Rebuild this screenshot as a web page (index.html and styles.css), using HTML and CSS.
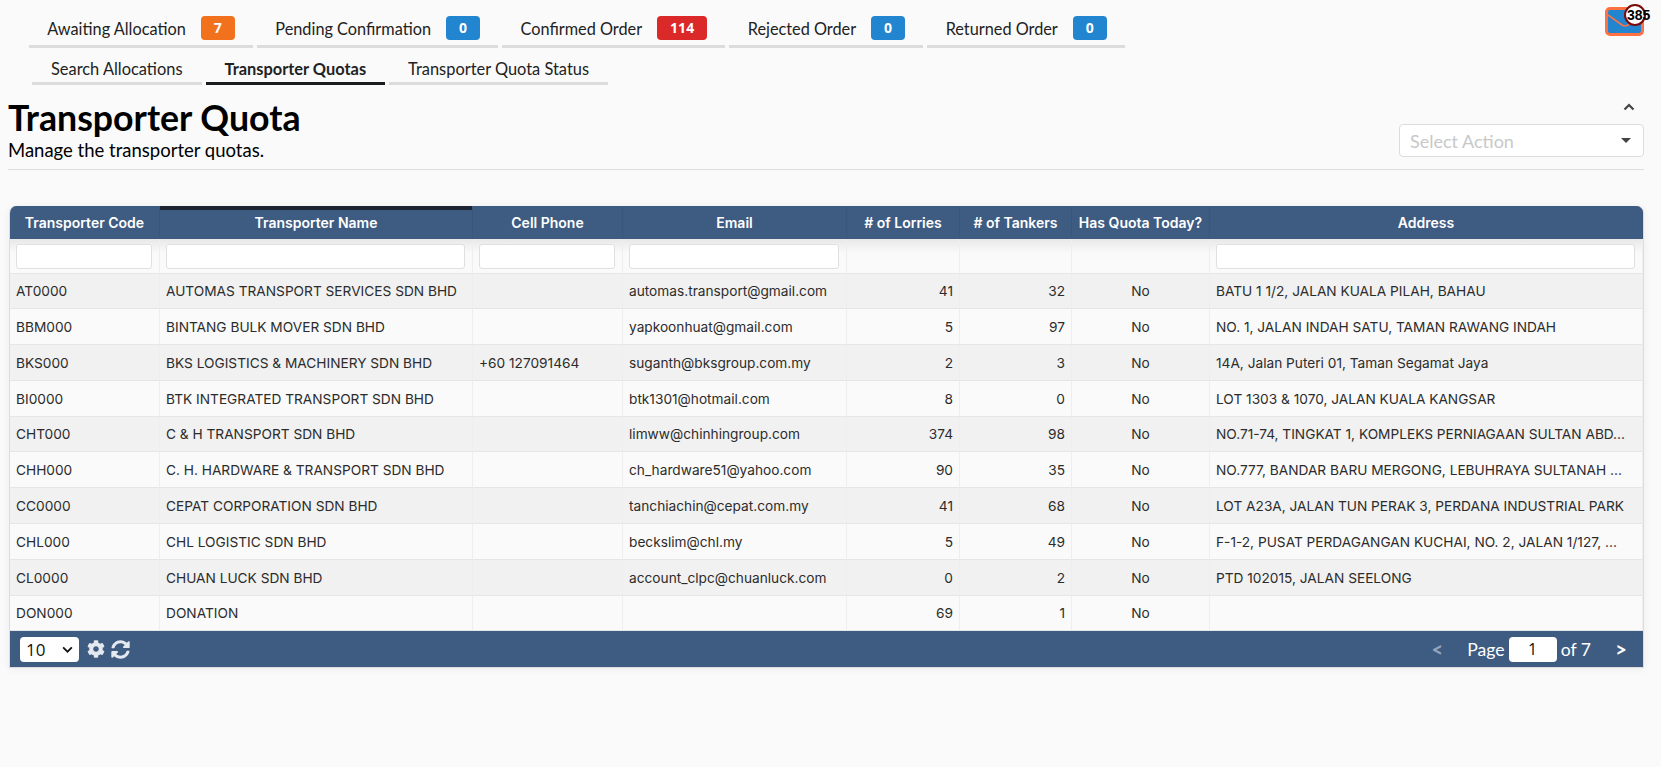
FILE: index.html
```html
<!DOCTYPE html>
<html lang="en">
<head>
<meta charset="utf-8">
<title>Transporter Quota</title>
<link rel="stylesheet" href="styles.css">
</head>
<body>
<div class="top">
  <nav class="tabs tabs-main">
    <a class="tab">Awaiting Allocation <span class="badge orange">7</span></a>
    <a class="tab">Pending Confirmation <span class="badge blue">0</span></a>
    <a class="tab">Confirmed Order <span class="badge red">114</span></a>
    <a class="tab">Rejected Order <span class="badge blue">0</span></a>
    <a class="tab">Returned Order <span class="badge blue">0</span></a>
  </nav>
  <div class="mail">
    <svg class="mail-icon" viewBox="0 0 33 23" width="33" height="23"><path d="M0 5 L14 15 Q17 17 20 15 L33 5" fill="none" stroke="#ff7043" stroke-width="1.6"/></svg>
    <span class="mail-count">385</span>
  </div>
</div>
<nav class="tabs tabs-sub">
  <a class="tab sub">Search Allocations</a>
  <a class="tab sub active">Transporter Quotas</a>
  <a class="tab sub">Transporter Quota Status</a>
</nav>
<header class="page-head">
  <div>
    <h1>Transporter Quota</h1>
    <p>Manage the transporter quotas.</p>
  </div>
  <div class="actions">
    <svg class="chev" viewBox="0 0 12 8" width="12" height="8"><path d="M1.5 6.5 L6 2 L10.5 6.5" fill="none" stroke="#444" stroke-width="2.2"/></svg>
    <div class="select">Select Action<span class="caret"></span></div>
  </div>
</header>
<section class="grid">
  <table>
    <colgroup>
      <col class="c1"><col class="c2"><col class="c3"><col class="c4"><col class="c5"><col class="c6"><col class="c7"><col>
    </colgroup>
    <thead>
      <tr class="heads">
        <th>Transporter Code</th><th class="sorted">Transporter Name</th><th>Cell Phone</th><th>Email</th><th># of Lorries</th><th># of Tankers</th><th>Has Quota Today?</th><th>Address</th>
      </tr>
      <tr class="filters">
        <td><input type="text"></td><td><input type="text"></td><td><input type="text"></td><td><input type="text"></td><td></td><td></td><td></td><td><input type="text"></td>
      </tr>
    </thead>
    <tbody>
      <tr><td>AT0000</td><td>AUTOMAS TRANSPORT SERVICES SDN BHD</td><td></td><td>automas.transport@gmail.com</td><td class="num">41</td><td class="num">32</td><td class="mid">No</td><td>BATU 1 1/2, JALAN KUALA PILAH, BAHAU</td></tr>
      <tr><td>BBM000</td><td>BINTANG BULK MOVER SDN BHD</td><td></td><td>yapkoonhuat@gmail.com</td><td class="num">5</td><td class="num">97</td><td class="mid">No</td><td>NO. 1, JALAN INDAH SATU, TAMAN RAWANG INDAH</td></tr>
      <tr><td>BKS000</td><td>BKS LOGISTICS &amp; MACHINERY SDN BHD</td><td>+60 127091464</td><td>suganth@bksgroup.com.my</td><td class="num">2</td><td class="num">3</td><td class="mid">No</td><td>14A, Jalan Puteri 01, Taman Segamat Jaya</td></tr>
      <tr><td>BI0000</td><td>BTK INTEGRATED TRANSPORT SDN BHD</td><td></td><td>btk1301@hotmail.com</td><td class="num">8</td><td class="num">0</td><td class="mid">No</td><td>LOT 1303 &amp; 1070, JALAN KUALA KANGSAR</td></tr>
      <tr><td>CHT000</td><td>C &amp; H TRANSPORT SDN BHD</td><td></td><td>limww@chinhingroup.com</td><td class="num">374</td><td class="num">98</td><td class="mid">No</td><td>NO.71-74, TINGKAT 1, KOMPLEKS PERNIAGAAN SULTAN ABD...</td></tr>
      <tr><td>CHH000</td><td>C. H. HARDWARE &amp; TRANSPORT SDN BHD</td><td></td><td>ch_hardware51@yahoo.com</td><td class="num">90</td><td class="num">35</td><td class="mid">No</td><td>NO.777, BANDAR BARU MERGONG, LEBUHRAYA SULTANAH ...</td></tr>
      <tr><td>CC0000</td><td>CEPAT CORPORATION SDN BHD</td><td></td><td>tanchiachin@cepat.com.my</td><td class="num">41</td><td class="num">68</td><td class="mid">No</td><td>LOT A23A, JALAN TUN PERAK 3, PERDANA INDUSTRIAL PARK</td></tr>
      <tr><td>CHL000</td><td>CHL LOGISTIC SDN BHD</td><td></td><td>beckslim@chl.my</td><td class="num">5</td><td class="num">49</td><td class="mid">No</td><td>F-1-2, PUSAT PERDAGANGAN KUCHAI, NO. 2, JALAN 1/127, ...</td></tr>
      <tr><td>CL0000</td><td>CHUAN LUCK SDN BHD</td><td></td><td>account_clpc@chuanluck.com</td><td class="num">0</td><td class="num">2</td><td class="mid">No</td><td>PTD 102015, JALAN SEELONG</td></tr>
      <tr><td>DON000</td><td>DONATION</td><td></td><td></td><td class="num">69</td><td class="num">1</td><td class="mid">No</td><td></td></tr>
    </tbody>
  </table>
  <footer class="pager">
    <div class="pager-left">
      <div class="size">10<svg viewBox="0 0 12 8" width="11" height="7"><path d="M1 1.5 L6 6.5 L11 1.5" fill="none" stroke="#111" stroke-width="2"/></svg></div>
      <svg class="tool" viewBox="0 0 512 512" width="18" height="18"><path fill="#e4e9ef" d="M487.4 315.7l-42.6-24.6c4.3-23.2 4.3-47 0-70.2l42.6-24.6c4.9-2.8 7.1-8.6 5.5-14-11.1-35.6-30-67.8-54.7-94.6-3.8-4.1-10-5.1-14.8-2.3L380.8 110c-17.9-15.4-38.5-27.3-60.8-35.1V25.8c0-5.6-3.9-10.5-9.4-11.7-36.7-8.2-74.3-7.8-109.2 0-5.5 1.2-9.4 6.1-9.4 11.7V75c-22.2 7.9-42.8 19.8-60.8 35.1L88.7 85.5c-4.9-2.8-11-1.9-14.8 2.3-24.7 26.7-43.6 58.9-54.7 94.6-1.7 5.4.6 11.2 5.5 14L67.3 221c-4.3 23.2-4.3 47 0 70.2l-42.6 24.6c-4.9 2.8-7.1 8.6-5.5 14 11.1 35.6 30 67.8 54.7 94.6 3.8 4.1 10 5.1 14.8 2.3l42.6-24.6c17.9 15.4 38.5 27.3 60.8 35.1v49.2c0 5.6 3.9 10.5 9.4 11.7 36.7 8.2 74.3 7.8 109.2 0 5.5-1.2 9.4-6.1 9.4-11.7v-49.2c22.2-7.9 42.8-19.8 60.8-35.1l42.6 24.6c4.9 2.8 11 1.9 14.8-2.3 24.7-26.7 43.6-58.9 54.7-94.6 1.5-5.5-.7-11.3-5.6-14.1zM256 336c-44.1 0-80-35.9-80-80s35.9-80 80-80 80 35.9 80 80-35.9 80-80 80z"/></svg>
      <svg class="tool" viewBox="0 0 512 512" width="19" height="19"><path fill="#e4e9ef" d="M370.72 133.28C339.458 104.008 298.888 87.962 255.848 88c-77.458.068-144.328 53.178-162.791 126.85-1.344 5.363-6.122 9.15-11.651 9.15H24.103c-7.498 0-13.194-6.807-11.807-14.176C33.933 94.924 134.813 8 256 8c66.448 0 126.791 26.136 171.315 68.685L463.03 40.97C478.149 25.851 504 36.559 504 57.941V192c0 13.255-10.745 24-24 24H345.941c-21.382 0-32.09-25.851-16.971-40.971l41.75-41.749zM32 296h134.059c21.382 0 32.09 25.851 16.971 40.971l-41.75 41.75c31.262 29.273 71.835 45.319 114.876 45.28 77.418-.07 144.315-53.144 162.787-126.849 1.344-5.363 6.122-9.15 11.651-9.15h57.304c7.498 0 13.194 6.807 11.807 14.176C478.067 417.076 377.187 504 256 504c-66.448 0-126.791-26.136-171.315-68.685L48.97 471.03C33.851 486.149 8 475.441 8 454.059V320c0-13.255 10.745-24 24-24z"/></svg>
    </div>
    <div class="pager-right">
      <span class="nav prev">&lt;</span>
      <span class="page">Page</span>
      <span class="page-box">1</span>
      <span class="page">of 7</span>
      <span class="nav next">&gt;</span>
    </div>
  </footer>
</section>
</body>
</html>
```
FILE: styles.css
```css
* { box-sizing: border-box; }
html, body { height: 100%; }
body {
  margin: 0;
  padding: 0 17px 0 8px;
  background: #fafafa;
  color: #111;
  font-family: Lato, "Liberation Sans", sans-serif;
  overflow: hidden;
}
.top { display: flex; justify-content: space-between; align-items: flex-start; }
.tabs { display: flex; gap: 4px; }
.tabs-main { margin: 12px 0 0 21px; }
.tabs-sub { margin: 4px 0 0 24px; }
.tab {
  display: flex;
  align-items: center;
  gap: 15px;
  padding: 4px 18.3px 5px;
  height: 36px;
  border-bottom: 3px solid #dcdcdc;
  color: #222;
  font-size: 16.3px;
  white-space: nowrap;
}
.tab.sub { height: 33px; padding: 4px 19px 1px; font-size: 16.4px; }
.tab.active { border-bottom-color: #1b1c1d; font-weight: 700; }
.badge {
  min-width: 34px;
  height: 24px;
  padding: 0 12px;
  border-radius: 4px;
  color: #fff;
  font-family: "Noto Sans", sans-serif;
  font-size: 14px;
  font-weight: 700;
  line-height: 24px;
  text-align: center;
}
.orange { background: #f2711c; }
.blue { background: #2185d0; }
.red { background: #db2828; min-width: 50px; }
.mail {
  position: relative;
  width: 39px;
  height: 29px;
  margin-top: 7px;
  background: #2185d0;
  border: 3px solid #ff7043;
  border-radius: 5px;
}
.mail-icon { display: block; width: 100%; height: 100%; }
.mail-count {
  position: absolute;
  top: -6px;
  left: 16px;
  width: 22px;
  height: 22px;
  padding-left: 1px;
  border: 2px solid #7b0a0a;
  border-radius: 50%;
  background: #fff;
  color: #000;
  font-family: "Liberation Sans", sans-serif;
  font-size: 14px;
  font-weight: 700;
  line-height: 18px;
  white-space: nowrap;
}
.page-head {
  display: flex;
  justify-content: space-between;
  height: 85px;
  padding-top: 14px;
  border-bottom: 1px solid #ddd;
}
h1 { margin: 0 0 3px; font-size: 35.7px; line-height: 38px; font-weight: 700; color: #000; }
p { margin: 0; font-size: 18.5px; line-height: 20px; color: #000; }
.actions { display: flex; flex-direction: column; align-items: flex-end; width: 245px; }
.chev { margin: 4px 9px 13px 0; }
.select {
  position: relative;
  width: 245px;
  height: 33px;
  padding: 0 10px;
  background: #fff;
  border: 1px solid #dcdcdc;
  border-radius: 4px;
  color: #c8c8c8;
  font-size: 18px;
  line-height: 33px;
}
.caret {
  position: absolute;
  right: 12px;
  top: 13px;
  border: 5px solid transparent;
  border-top: 5px solid #444;
  border-bottom: 0;
}
.grid {
  margin: 36px 0 0 1px;
  border: 1px solid #ddd;
  border-top: 0;
  border-radius: 7px 7px 0 0;
  overflow: hidden;
  width: 1635px;
  box-shadow: 0 1px 8px rgba(0,0,0,.06);
}
table {
  width: 100%;
  table-layout: fixed;
  border-collapse: separate;
  border-spacing: 0;
  font-family: Inter, "Open Sans", sans-serif;
  font-size: 13.7px;
  color: #2c2c2c;
}
.c1 { width: 150px; }
.c2 { width: 313px; }
.c3 { width: 150px; }
.c4 { width: 224px; }
.c5 { width: 113px; }
.c6 { width: 112px; }
.c7 { width: 138px; }
.heads { height: 33px; background: #3e5c82; }
th {
  padding: 0 2px;
  border-right: 1px solid #3a567a;
  color: #fff;
  font-size: 14px;
  font-weight: 600;
  white-space: nowrap;
}
th.sorted { box-shadow: inset 0 4px 0 #1c2433; }
.filters { height: 34px; background: linear-gradient(#e8e8e8, #fafafa 40%); }
.filters td { padding: 5px 7px 4px 6px; }
td { padding: 0 6px; border-right: 1px solid #eee; border-bottom: 1px solid #e6e6e6; white-space: nowrap; }
input {
  display: block;
  width: 100%;
  height: 25px;
  background: #fff;
  border: 1px solid #e0e0e0;
  border-radius: 3px;
}
tbody tr { height: 36px; background: #fafafa; }
tbody tr:nth-child(odd) { background: #f1f1f1; }
tbody tr:nth-child(5n), tbody tr:first-child { height: 35px; }
.num { text-align: right; }
.mid { text-align: center; }
.pager {
  display: flex;
  justify-content: space-between;
  align-items: center;
  height: 36px;
  padding: 0 16px 0 10px;
  background: #3e5c82;
  color: #fff;
  font-size: 18px;
}
.pager-left { display: flex; align-items: center; gap: 6px; }
.size {
  display: flex;
  align-items: center;
  justify-content: space-between;
  width: 59px;
  height: 25px;
  padding: 0 6px;
  margin-right: 2px;
  background: #fff;
  border-radius: 4px;
  color: #111;
  font-family: "Open Sans", sans-serif;
  font-size: 17px;
}
.pager-right { display: flex; align-items: center; gap: 4px; }
.nav { font-weight: 700; font-size: 20px; width: 12px; text-align: center; }
.prev { opacity: .45; margin-right: 20px; }
.next { margin-left: 20px; }
.page { font-size: 17.6px; }
.page-box {
  width: 48px;
  height: 25px;
  background: #fff;
  border-radius: 4px;
  color: #111;
  text-align: center;
  font-family: "Open Sans", sans-serif;
  font-size: 16px;
  line-height: 25px;
}
```
